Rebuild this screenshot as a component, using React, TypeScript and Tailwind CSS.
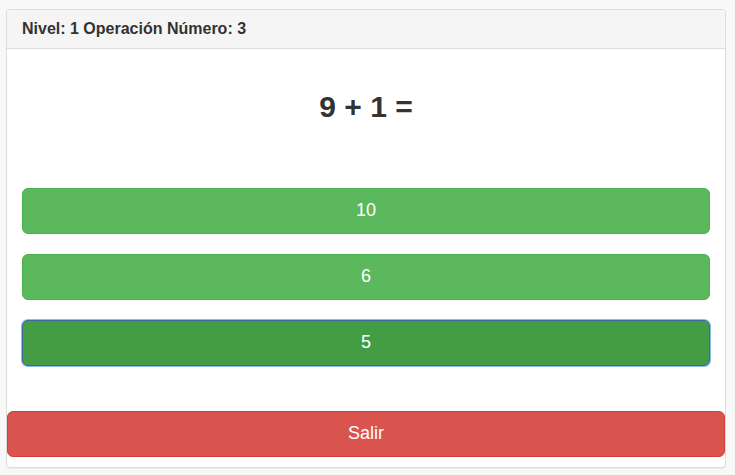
const options = [
  { label: "10", active: false },
  { label: "6", active: false },
  { label: "5", active: true },
];

export default function App() {
  return (
    <div className="min-h-screen bg-[#f8f8f8] pt-[9px] pl-[6px] font-['Liberation_Sans',Arial,sans-serif] text-[#333]">
      <div className="w-[720px] rounded border border-[#ddd] bg-white shadow-[0_1px_1px_rgba(0,0,0,0.05)]">
        <div className="rounded-t border-b border-[#ddd] bg-[#f5f5f5] px-[15px] py-[10px]">
          <h3 className="text-[16px] leading-[17.6px] font-bold text-[#333]">
            Nivel: 1 Operación Número: 3
          </h3>
        </div>
        <div className="px-[15px] pt-[41px]">
          <h2 className="text-center text-[30px] leading-[33px] font-bold">9 + 1 =</h2>
          <div className="mt-[65px] flex flex-col gap-5">
            {options.map((o) =>
              o.active ? (
                <button
                  key={o.label}
                  className="h-[46px] w-full rounded-md border border-[#3a6a9e] bg-[#449d44] text-[18px] text-white ring-1 ring-[#8fb8f0]"
                >
                  {o.label}
                </button>
              ) : (
                <button
                  key={o.label}
                  className="h-[46px] w-full rounded-md border border-[#4cae4c] bg-[#5cb85c] text-[18px] text-white"
                >
                  {o.label}
                </button>
              )
            )}
          </div>
        </div>
        <div className="mt-[45px] mb-[10px]">
          <button className="h-[46px] w-full rounded-md border border-[#d43f3a] bg-[#d9534f] text-[18px] text-white">
            Salir
          </button>
        </div>
      </div>
    </div>
  );
}
